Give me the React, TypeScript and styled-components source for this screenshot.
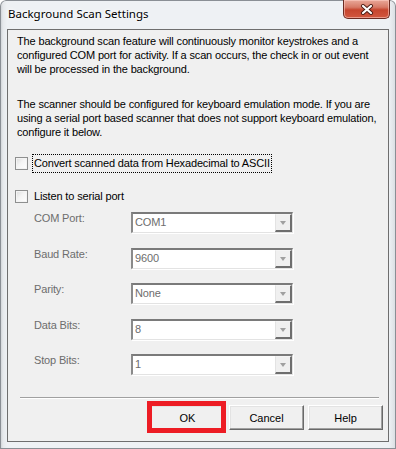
import styled, { createGlobalStyle } from 'styled-components';

const GlobalStyle = createGlobalStyle`
  html, body {
    margin: 0;
    padding: 0;
    background: #ffffff;
  }
  * {
    box-sizing: border-box;
  }
`;

const Window = styled.div`
  width: 396px;
  height: 449px;
  display: flex;
  flex-direction: column;
  padding: 0 7px 7px 7px;
  border-radius: 6px 6px 0 0;
  background:
    linear-gradient(90deg, #c9cdd1 0px, #e6e9ec 3px, #eef1f4 7px, #eef1f4 389px, #d9dde1 396px),
    #eef1f4;
  box-shadow: inset 0 0 0 1px #8a8f95;
  font-family: 'Liberation Sans', Arial, sans-serif;
`;

const TitleBar = styled.div`
  height: 29px;
  display: flex;
  align-items: flex-start;
  justify-content: space-between;
`;

const Title = styled.span`
  margin-top: 6px;
  margin-left: 1px;
  font-family: 'Noto Sans', 'Open Sans', sans-serif;
  font-size: 11.5px;
  line-height: 16px;
  color: #000000;
  text-shadow: 0 0 6px #ffffff, 0 0 3px #ffffff;
`;

const CloseButton = styled.div`
  width: 47px;
  height: 19px;
  margin-right: -1px;
  display: flex;
  align-items: center;
  justify-content: center;
  border: 1px solid #6b2b22;
  border-top: none;
  border-radius: 0 0 5px 5px;
  background: linear-gradient(180deg, #e9a899 0%, #d77a67 40%, #c6452e 55%, #d1583f 100%);
  box-shadow: inset 0 0 0 1px rgba(255, 210, 200, 0.55);
`;

const Client = styled.div`
  flex: 1;
  display: flex;
  flex-direction: column;
  background: #f0f0f0;
  border: 1px solid #6e6e6e;
  padding: 4px 5px 11px 9px;
  color: #000000;
  font-size: 11px;
  letter-spacing: -0.15px;
`;

const Paragraph = styled.p<{ $gap?: number }>`
  margin: ${(p) => p.$gap ?? 0}px 0 0 0;
  line-height: 14px;
  white-space: nowrap;
`;

const CheckRow = styled.label<{ $gap: number }>`
  display: flex;
  align-items: center;
  height: 17px;
  margin-top: ${(p) => p.$gap}px;
  margin-left: -2px;
`;

const CheckBox = styled.span`
  width: 13px;
  height: 13px;
  border: 1px solid #8e8f8f;
  background: linear-gradient(135deg, #dcdcdc 0%, #f4f4f4 45%, #ffffff 100%);
  box-shadow: inset 0 0 0 1px #f4f4f4;
`;

const CheckText = styled.span<{ $focused?: boolean }>`
  margin-left: 4px;
  padding: 1px 1px 2px 1px;
  line-height: 14px;
  border: 1px dotted ${(p) => (p.$focused ? '#000000' : 'transparent')};
`;

const FieldGrid = styled.div`
  display: grid;
  grid-template-columns: 97px 162px;
  row-gap: 14.5px;
  margin-top: 7px;
  margin-left: 17px;
`;

const FieldLabel = styled.span`
  color: #6d6d6d;
  line-height: 14px;
  margin-top: -1px;
`;

const Combo = styled.div`
  height: 21px;
  display: flex;
  align-items: stretch;
  background: #ffffff;
  border-style: solid;
  border-width: 2px 1px 1px 2px;
  border-color: #7a7a7a #e3e3e3 #e3e3e3 #8a8a8a;
  box-shadow: 1px 1px 0 #ffffff;
`;

const ComboValue = styled.span`
  flex: 1;
  padding-left: 2px;
  color: #6d6d6d;
  line-height: 17px;
`;

const ComboButton = styled.span`
  width: 17px;
  display: flex;
  align-items: center;
  justify-content: center;
  background: #f0f0f0;
  border-style: solid;
  border-width: 1px 2px 2px 1px;
  border-color: #f4f4f4 #6e6e6e #6e6e6e #e3e3e3;
`;

const Arrow = styled.span`
  width: 0;
  height: 0;
  border-left: 3.5px solid transparent;
  border-right: 3.5px solid transparent;
  border-top: 4px solid #a0a0a0;
  margin-top: 1px;
`;

const Separator = styled.div`
  margin: 22px 4px 0 3px;
  height: 2px;
  border-top: 1px solid #a0a0a0;
  border-bottom: 1px solid #ffffff;
`;

const ButtonRow = styled.div`
  display: flex;
  justify-content: flex-end;
  gap: 4px;
  margin-top: 6px;
`;

const Button = styled.div<{ $marked?: boolean }>`
  position: relative;
  width: 75px;
  height: 25px;
  display: flex;
  align-items: center;
  justify-content: center;
  background: #f0f0f0;
  border-style: solid;
  border-width: 1px;
  border-color: #ffffff #696969 #696969 #ffffff;
  box-shadow: inset -1px -1px 0 #a0a0a0, inset 1px 1px 0 #e3e3e3;
  color: #000000;
  font-size: 11px;
  letter-spacing: 0;

  &::after {
    content: '';
    display: ${(p) => (p.$marked ? 'block' : 'none')};
    position: absolute;
    left: -4px;
    right: -2px;
    top: -5px;
    bottom: -4px;
    border: 5px solid #ed1c24;
  }
`;

const fields = [
  { label: 'COM Port:', value: 'COM1' },
  { label: 'Baud Rate:', value: '9600' },
  { label: 'Parity:', value: 'None' },
  { label: 'Data Bits:', value: '8' },
  { label: 'Stop Bits:', value: '1' },
];

function CloseGlyph() {
  return (
    <svg width="14" height="11" viewBox="0 0 14 11">
      <path d="M3 2 L11 9 M11 2 L3 9" stroke="#4a1c14" strokeWidth="4" strokeLinecap="round" />
      <path d="M3 2 L11 9 M11 2 L3 9" stroke="#ffffff" strokeWidth="2.2" strokeLinecap="round" />
    </svg>
  );
}

export default function App() {
  return (
    <>
      <GlobalStyle />
      <Window>
        <TitleBar>
          <Title>Background Scan Settings</Title>
          <CloseButton>
            <CloseGlyph />
          </CloseButton>
        </TitleBar>
        <Client>
          <Paragraph>
            The background scan feature will continuously monitor keystrokes and a
            <br />
            configured COM port for activity. If a scan occurs, the check in or out event
            <br />
            will be processed in the background.
          </Paragraph>
          <Paragraph $gap={21}>
            The scanner should be configured for keyboard emulation mode. If you are
            <br />
            using a serial port based scanner that does not support keyboard emulation,
            <br />
            configure it below.
          </Paragraph>
          <CheckRow $gap={16}>
            <CheckBox />
            <CheckText $focused>Convert scanned data from Hexadecimal to ASCII</CheckText>
          </CheckRow>
          <CheckRow $gap={16}>
            <CheckBox />
            <CheckText>Listen to serial port</CheckText>
          </CheckRow>
          <FieldGrid>
            {fields.map((f) => (
              <>
                <FieldLabel key={f.label}>{f.label}</FieldLabel>
                <Combo key={f.value}>
                  <ComboValue>{f.value}</ComboValue>
                  <ComboButton>
                    <Arrow />
                  </ComboButton>
                </Combo>
              </>
            ))}
          </FieldGrid>
          <Separator />
          <ButtonRow>
            <Button $marked>OK</Button>
            <Button>Cancel</Button>
            <Button>Help</Button>
          </ButtonRow>
        </Client>
      </Window>
    </>
  );
}
